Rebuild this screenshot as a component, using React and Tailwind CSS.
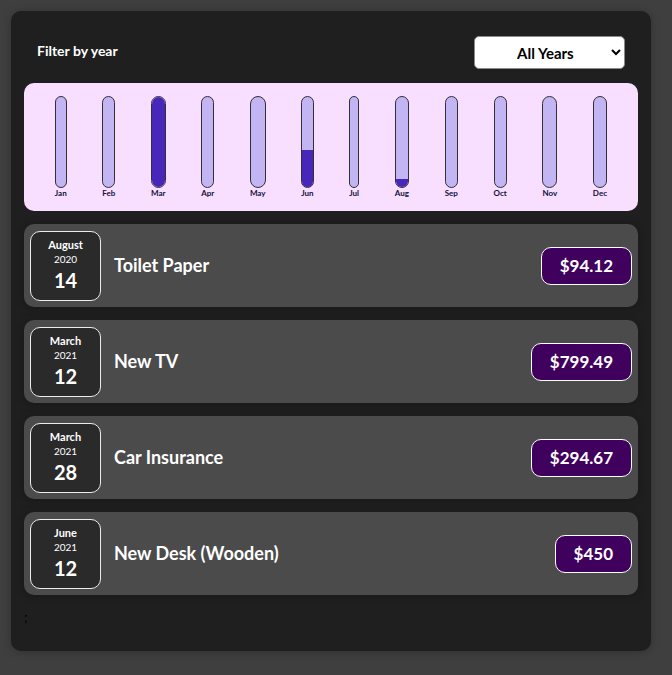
import React, { useState } from 'react';

const EXPENSES = [
  { id: 'e1', title: 'Toilet Paper', amount: 94.12, date: new Date(2020, 7, 14) },
  { id: 'e2', title: 'New TV', amount: 799.49, date: new Date(2021, 2, 12) },
  { id: 'e3', title: 'Car Insurance', amount: 294.67, date: new Date(2021, 2, 28) },
  { id: 'e4', title: 'New Desk (Wooden)', amount: 450, date: new Date(2021, 5, 12) },
];

const MONTHS = ['Jan', 'Feb', 'Mar', 'Apr', 'May', 'Jun', 'Jul', 'Aug', 'Sep', 'Oct', 'Nov', 'Dec'];

const ChartBar = ({ label, value, max }) => {
  const fill = max > 0 ? Math.round((value / max) * 100) + '%' : '0%';
  return (
    <div className="h-full flex flex-col items-center">
      <div className="flex-1 w-full min-w-[10px] border border-[#313131] rounded-[10px] bg-[#c3b4f3] overflow-hidden flex flex-col justify-end">
        <div className="w-full bg-[#4826b9]" style={{ height: fill }}></div>
      </div>
      <div className="text-[8px] leading-[10px] font-bold text-[#10103a]">{label}</div>
    </div>
  );
};

const ExpenseDate = ({ date }) => {
  const month = date.toLocaleString('en-US', { month: 'long' });
  const year = date.getFullYear();
  const day = date.toLocaleString('en-US', { day: '2-digit' });
  return (
    <div className="w-[71px] h-[70px] shrink-0 flex flex-col items-center justify-center border border-[#ececec] bg-[#2a2a2a] text-white rounded-[10px]">
      <div className="text-[11px] leading-[14px] font-bold">{month}</div>
      <div className="text-[10px] leading-[14px]">{year}</div>
      <div className="mt-[1px] text-[20px] leading-[26px] font-bold">{day}</div>
    </div>
  );
};

const ExpenseItem = ({ item }) => (
  <li className="h-[83px] flex items-center justify-between px-[6px] rounded-[10px] bg-[#4b4b4b] shadow-[0_1px_8px_rgba(0,0,0,0.25)]">
    <ExpenseDate date={item.date} />
    <div className="flex-1 flex items-center justify-between">
      <h2 className="mx-[13px] text-[18px] font-bold text-white">{item.title}</h2>
      <div className="text-[17px] leading-[22px] font-bold text-white bg-[#40005d] border border-white px-[18px] py-[7px] rounded-[10px]">
        ${item.amount}
      </div>
    </div>
  </li>
);

export default function App() {
  const [year, setYear] = useState('all');

  const filtered = year === 'all' ? EXPENSES : EXPENSES.filter(e => String(e.date.getFullYear()) === year);

  const monthly = MONTHS.map((label, i) => ({
    label,
    value: filtered.filter(e => e.date.getMonth() === i).reduce((s, e) => s + e.amount, 0),
  }));
  const max = Math.max(...monthly.map(m => m.value));

  return (
    <div className="min-h-screen bg-[#3f3f3f] pt-[11px] pb-[24px] font-['Lato',sans-serif]">
      <div className="ml-[11px] w-[640px] p-[13px] bg-[#1f1f1f] rounded-[10px] shadow-[0_1px_8px_rgba(0,0,0,0.25)]">

        {/* FILTER */}
        <div className="px-[13px] text-white">
          <div className="flex items-center justify-between mt-[12px] mb-[14px]">
            <label className="font-bold text-[14px] mb-[5px]">Filter by year</label>
            <select
              value={year}
              onChange={e => setYear(e.target.value)}
              className="w-[151px] h-[33px] pl-[38px] pr-[8px] bg-white text-black font-bold text-[15px] rounded-[5px] border border-[#8a8a8a]"
            >
              <option value="all">All Years</option>
              <option value="2022">2022</option>
              <option value="2021">2021</option>
              <option value="2020">2020</option>
              <option value="2019">2019</option>
            </select>
          </div>
        </div>

        {/* CHART */}
        <div className="h-[128px] p-[13px] rounded-[10px] bg-[#f8dfff] flex justify-around">
          {monthly.map(m => (
            <ChartBar key={m.label} label={m.label} value={m.value} max={max} />
          ))}
        </div>

        {/* LIST */}
        <ul className="mt-[13px] flex flex-col gap-[13px]">
          {filtered.map(item => (
            <ExpenseItem key={item.id} item={item} />
          ))}
        </ul>
        <div className="h-[43px] pt-[12px] text-[14px] leading-[20px] text-black">;</div>
      </div>
    </div>
  );
}
